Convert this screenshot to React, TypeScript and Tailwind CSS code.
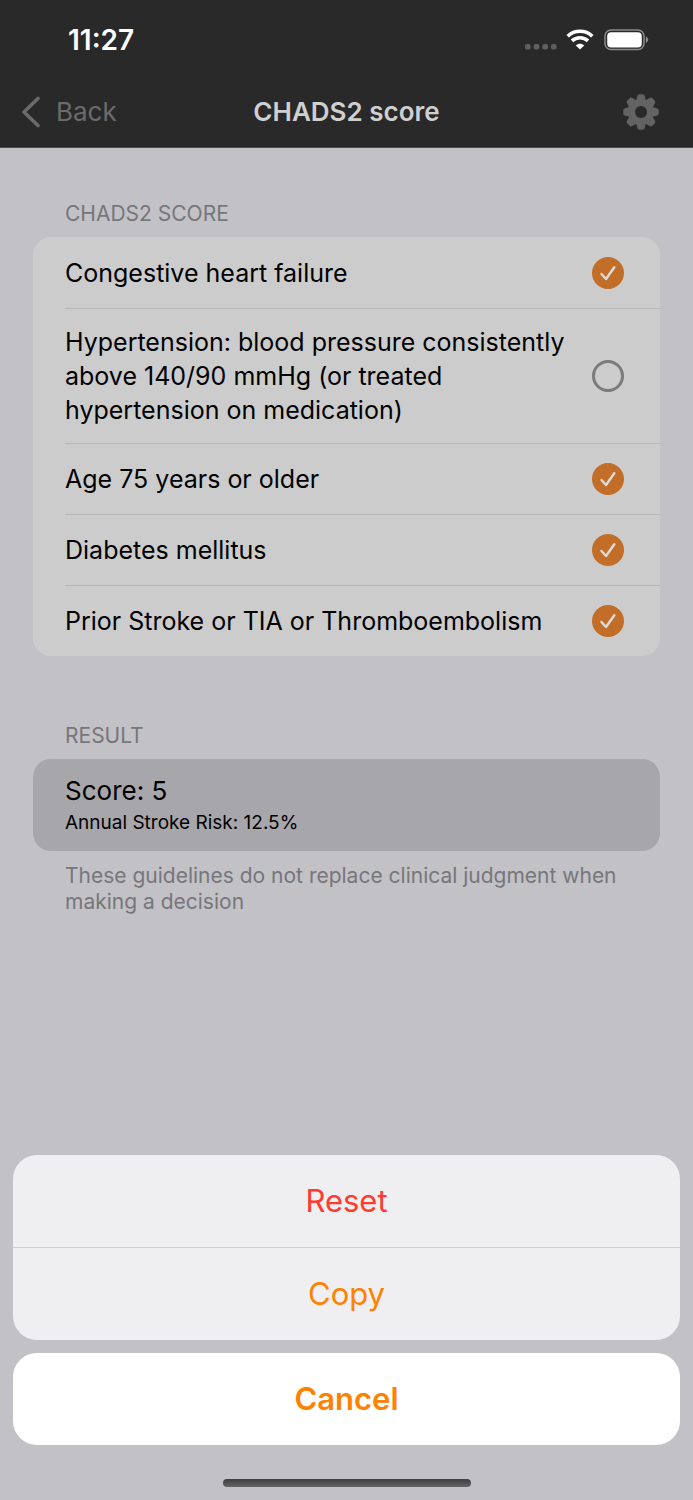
import { useState } from 'react';

const criteria = [
  { id: 'chf', label: 'Congestive heart failure', checked: true },
  {
    id: 'hypertension',
    label: 'Hypertension: blood pressure consistently above 140/90 mmHg (or treated hypertension on medication)',
    checked: false,
  },
  { id: 'age', label: 'Age 75 years or older', checked: true },
  { id: 'diabetes', label: 'Diabetes mellitus', checked: true },
  { id: 'stroke', label: 'Prior Stroke or TIA or Thromboembolism', checked: true },
];

function StatusIcons() {
  return (
    <div className="flex items-center">
      <svg width="32" height="24" viewBox="0 0 32 24" fill="#5f5f5f">
        <rect x="0" y="16" width="5.6" height="5.6" rx="1.8" />
        <rect x="8.7" y="16" width="5.6" height="5.6" rx="1.8" />
        <rect x="17.4" y="16" width="5.6" height="5.6" rx="1.8" />
        <rect x="26" y="16" width="5.6" height="5.6" rx="1.8" />
      </svg>
      <svg className="ml-[9px]" width="28" height="24" viewBox="0 0 28 24" fill="none" stroke="#fff">
        <path d="M1.7 8.2A17.8 17.8 0 0 1 26.3 8.2" strokeWidth="3.6" />
        <path d="M6 12.9A11.6 11.6 0 0 1 22 12.9" strokeWidth="3.6" />
        <path d="M9.8 17.4C12.3 15.2 15.7 15.2 18.2 17.4L14 21.6Z" fill="#fff" stroke="none" />
      </svg>
      <svg className="ml-[10px]" width="45" height="24" viewBox="0 0 45 24">
        <rect x="1" y="2" width="39" height="19.6" rx="6" fill="none" stroke="#8b8b8d" strokeWidth="1.5" />
        <rect x="3.2" y="4.2" width="34.6" height="15.2" rx="4" fill="#fff" />
        <path d="M41.8 8.6c1.5.7 2.4 1.9 2.4 3.2s-.9 2.5-2.4 3.2Z" fill="#8b8b8d" />
      </svg>
    </div>
  );
}

function GearIcon() {
  const angles = [0, 45, 90, 135, 180, 225, 270, 315];
  return (
    <svg width="36" height="36" viewBox="-18 -18 36 36">
      <g fill="#636363">
        <circle r="12.6" />
        {angles.map((angle) => (
          <path
            key={angle}
            transform={`rotate(${angle})`}
            d="M-6 -10.5Q-4.4 -12 -3.8 -15.6Q-3.4 -17.8 -1.8 -17.8H1.8Q3.4 -17.8 3.8 -15.6Q4.4 -12 6 -10.5Z"
          />
        ))}
      </g>
      <circle r="6" fill="#292929" />
    </svg>
  );
}

function CriterionRow({ item, onToggle }: { item: (typeof criteria)[number]; onToggle: () => void }) {
  return (
    <li className="group ml-8">
      <label
        htmlFor={item.id}
        className="flex min-h-[71px] items-center justify-between gap-6 border-t border-[#b7b7b9] py-4 pr-9 group-first:border-transparent"
      >
        <span className="text-[25px] leading-[34px]">{item.label}</span>
        <span className="relative flex shrink-0">
          <input
            id={item.id}
            type="checkbox"
            checked={item.checked}
            onChange={onToggle}
            className="peer size-8 appearance-none rounded-full border-[3px] border-[#7b7b7b] checked:border-[#c26e29] checked:bg-[#c26e29]"
          />
          <svg
            className="pointer-events-none absolute inset-0 hidden peer-checked:block"
            width="32"
            height="32"
            viewBox="0 0 32 32"
            fill="none"
            stroke="#dedad6"
            strokeWidth="2.5"
            strokeLinecap="round"
            strokeLinejoin="round"
          >
            <path d="M9.5 17L14 22L22.3 10.3" />
          </svg>
        </span>
      </label>
    </li>
  );
}

export default function App() {
  const [items, setItems] = useState(criteria);

  const toggle = (id: string) =>
    setItems(items.map((item) => (item.id === id ? { ...item, checked: !item.checked } : item)));

  return (
    <div className="relative flex min-h-screen flex-col bg-[#c2c1c6] font-['Inter',sans-serif] text-black">
      <header className="border-b border-[#4a4a4b] bg-[#292929]">
        {/* Status bar */}
        <div className="flex h-[76px] items-center justify-between pt-1 pr-11 pl-[68px]">
          <time className="text-[28px] leading-[38px] font-semibold text-white">11:27</time>
          <StatusIcons />
        </div>

        {/* Navigation bar */}
        <div className="grid h-[71px] grid-cols-[1fr_auto_1fr] items-center px-5">
          <button className="flex items-center gap-[14px] justify-self-start text-[26px] text-[#6b6b6b]">
            <svg width="22" height="34" viewBox="0 0 22 34" fill="none" stroke="#6b6b6b" strokeWidth="3.6" strokeLinecap="round" strokeLinejoin="round">
              <path d="M18 3.5L4 17L18 30.5" />
            </svg>
            Back
          </button>
          <h1 className="text-[26px] font-semibold text-[#d0d0d0]">CHADS2 score</h1>
          <button aria-label="Settings" className="mr-[14px] justify-self-end">
            <GearIcon />
          </button>
        </div>
      </header>

      <main className="px-[33px] pt-[50px]">
        <section>
          <h2 className="px-8 text-[21px] leading-[32px] text-[#77767b]">CHADS2 SCORE</h2>
          <ul className="mt-[7px] rounded-[18px] bg-[#cccccc]">
            {items.map((item) => (
              <CriterionRow key={item.id} item={item} onToggle={() => toggle(item.id)} />
            ))}
          </ul>
        </section>

        <section className="mt-16">
          <h2 className="px-8 text-[21px] leading-[32px] text-[#77767b]">RESULT</h2>
          <div className="mt-[7px] rounded-[18px] bg-[#a7a6aa] px-8 py-[14px]">
            <p className="text-[26px] leading-[36px]">Score: 5</p>
            <p className="text-[19px] leading-[28px]">Annual Stroke Risk: 12.5%</p>
          </div>
          <p className="mt-3 px-8 text-[21px] leading-[26px] text-[#77767b]">
            These guidelines do not replace clinical judgment when making a decision
          </p>
        </section>
      </main>

      {/* Action sheet */}
      <div className="absolute inset-x-0 bottom-0 px-[13px] pb-[13px]">
        <div className="overflow-hidden rounded-[24px] bg-[#efeff1]">
          <button className="block h-[93px] w-full border-b border-[#cfcfd2] text-[31px] text-[#ff3a30]">Reset</button>
          <button className="block h-[92px] w-full text-[31px] text-[#ff8100]">Copy</button>
        </div>
        <button className="mt-[13px] block h-[92px] w-full rounded-[24px] bg-white text-[31px] font-semibold text-[#ff8100]">
          Cancel
        </button>
        <div className="mx-auto mt-[34px] h-2 w-[248px] rounded-full bg-linear-to-b from-[#3e3e40] to-[#656466]"></div>
      </div>
    </div>
  );
}
